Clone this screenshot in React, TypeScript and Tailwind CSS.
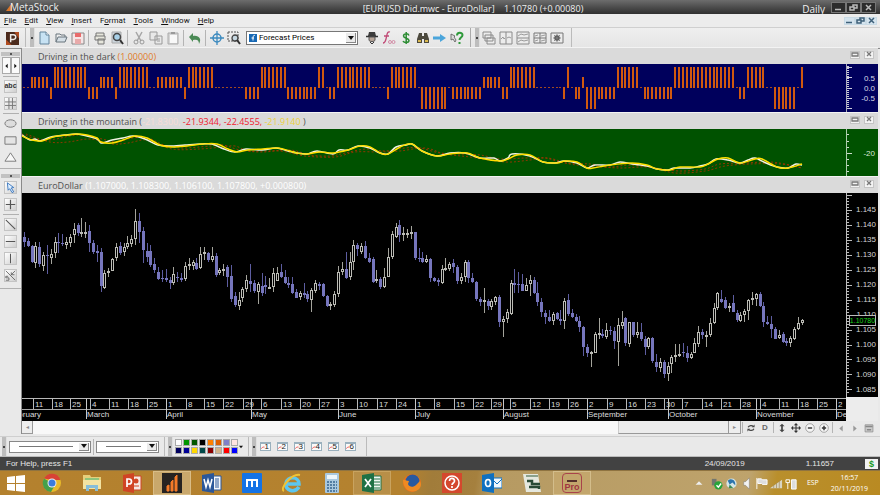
import type { ReactNode } from "react";

type Candle = [number, number, number, number, number];

/* high, body top, body bottom, low, rising (1) or falling (0); thirds of a pixel */
const firstHalf: Candle[] = [
  [365,380,395,410,0],[385,393,407,412,0],[405,407,455,460,0],[395,408,460,475,1],[395,410,462,470,0],
  [425,435,468,482,1],[405,435,437,492,0],[418,432,445,462,1],[380,397,430,445,1],[370,397,400,430,0],
  [372,398,402,408,0],[382,397,405,417,1],[372,380,400,412,1],[340,357,375,398,1],[340,345,368,378,0],
  [323,366,370,380,1],[336,366,370,385,1],[345,362,400,425,0],[390,400,425,432,0],[405,422,430,455,0],
  [415,427,527,545,0],[480,488,533,537,1],[474,482,487,502,1],[443,446,482,484,1],[398,410,445,452,1],
  [395,408,428,435,0],[398,412,425,437,1],[378,400,410,416,1],[375,388,402,412,1],[297,333,388,405,1],
  [310,333,367,400,0],[350,362,420,460,0],[400,422,440,455,0],[405,422,465,470,0],[445,462,480,490,0],
  [470,485,507,510,0],[480,503,507,515,0],[478,505,510,517,0],[502,510,520,537,0],[472,492,520,525,1],
  [485,500,505,515,0],[490,503,510,515,0],[455,468,508,512,1],[445,463,467,480,1],[450,457,467,480,1],
  [445,460,477,480,0],[412,433,475,478,1],[410,427,433,450,1],[425,428,450,455,0],[410,438,450,455,1],
  [430,437,495,500,0],[473,480,490,495,1],[462,476,482,497,1],[465,470,500,530,0],[465,497,567,575,0],
  [545,557,585,590,0],[545,570,587,600,1],
  [532,537,565,577,1],[496,510,537,545,1],[462,512,522,545,0],[510,520,542,548,0],[515,522,545,582,1],
  [490,527,550,558,0],[498,525,532,552,0],[505,530,533,538,1],[475,490,532,545,1],[472,488,512,512,1],
  [463,487,502,505,0],[480,500,520,522,0],[500,518,525,533,0],[500,521,548,551,0],[537,546,563,565,0],
  [543,548,562,570,1],[518,548,555,565,0],[543,552,568,575,0],[534,541,570,605,1],[510,520,542,550,1],
  [515,522,528,540,0],[520,523,558,560,0],[555,558,587,592,0],[575,583,588,600,1],[542,552,585,592,1],
  [468,485,552,562,1],[455,477,487,495,1],[427,478,503,507,0],[425,455,500,510,1],[390,405,457,480,1],
  [400,405,417,437,0],[400,407,427,432,1],[393,408,445,448,0],[430,443,457,460,0],[440,448,515,520,0],
  [480,507,510,520,1],[502,508,532,538,0],[475,500,532,535,1],[415,440,500,502,1],[363,373,442,448,1],
  [340,350,380,385,1],[330,345,375,395,0],[352,370,374,392,1],[357,370,372,385,1],[348,367,371,387,1],
  [365,367,445,450,0],[415,443,447,455,0],[425,445,457,460,0],[435,447,457,458,1],[445,447,505,515,0],
  [500,505,513,515,0],[505,510,517,527,0],[465,478,518,522,1],[445,473,477,483,1],[455,462,477,483,1],
  [448,460,472,488,0],[465,472,513,522,0],
];
const secondHalf: Candle[] = [
  [430,442,453,463,1],[390,397,442,455,1],[390,395,443,460,0],[430,445,455,458,0],[453,455,508,513,0],
  [500,508,517,527,0],[475,510,515,550,1],[507,512,527,540,0],[508,513,530,540,1],[498,502,515,525,1],
  [495,502,575,590,0],[557,568,577,620,1],[537,547,567,580,1],[450,460,553,555,1],[418,460,464,490,0],
  [427,461,465,490,0],[433,463,482,484,0],[443,465,482,483,1],[435,451,463,497,1],[440,450,490,492,0],
  [455,488,515,527,0],[503,517,545,560,0],[540,548,562,583,0],[540,562,572,575,0],[545,552,573,585,1],
  [545,550,567,570,0],[540,567,572,585,0],[505,513,572,597,1],[493,510,553,558,0],[538,550,562,565,0],
  [553,560,573,577,0],[558,573,592,607,0],[588,590,652,677,0],[643,652,670,680,0],[662,667,672,710,1],
  [605,612,668,670,1],[565,608,612,627,1],[597,612,617,623,0],[580,600,622,628,1],[588,600,604,615,0],
  [590,604,633,657,0],[565,585,635,708,1],[543,577,588,597,1],[560,565,640,647,0],[575,577,643,652,1],
  [575,577,615,622,0],[577,607,615,625,1],[580,605,627,632,0],[618,628,650,675,0],[620,625,650,657,1],
  [620,625,693,698,0],[673,695,712,725,0],[683,697,715,725,1],[690,697,733,745,0],[695,707,733,752,1],
  [675,680,703,728,1],[643,675,682,697,1],[643,672,678,682,1],[640,666,670,680,0],[647,670,683,695,0],
  [665,672,683,688,1],[625,640,668,670,1],[587,605,642,650,1],[597,605,615,627,0],[603,615,620,652,1],
  [565,580,615,622,1],[518,533,578,583,1],[487,490,533,540,1],[480,508,515,520,0],[500,510,533,537,0],
  [520,527,533,545,1],[495,520,545,547,0],[540,548,570,575,0],[545,555,573,575,1],[537,543,555,575,1],
  [507,510,542,570,1],[485,505,508,525,1],[488,493,508,527,1],[485,492,527,530,0],[515,527,575,590,0],
  [558,576,582,585,0],[558,583,597,625,0],[590,597,627,628,0],[600,615,625,627,1],[605,612,635,640,0],
  [623,633,640,647,0],[618,625,640,652,1],[592,597,627,630,1],[560,580,598,600,1],[568,571,580,585,1],
];
const candles = [
  ...firstHalf.map((c) => ({ base: 110, c })),
  ...secondHalf.map((c) => ({ base: 130, c })),
];
const barX = (i: number) => Math.round(24 + i * 3.831);

/* signal level, number of bars */
const signal: [number, number][] = [
  [0,2],[0.5,5],[-0.5,1],[1,9],[-0.5,3],[0.5,4],[-0.5,1],[1,8],[0,2],[0.5,7],[-0.5,1],[1,7],[0,8],
  [-0.5,4],[1,7],[-0.5,8],[1,2],[0,1],[-0.5,2],[1,9],[0,4],[-0.5,1],[1,7],[0,1],[-1,7],[0,1],[-0.5,8],
  [0.5,5],[-0.5,2],[1,7],[0,7],[-0.5,1],[1,1],[0,1],[-0.5,2],[0.5,1],[-1,3],[-0.5,5],[1,6],[0,1],
  [-0.5,8],[1,16],[0,1],[-0.5,2],[1,5],[0,2],[-1,6],[0,1],[1,1],
];
const signalBars = signal.flatMap(([v, n]) => Array.from({ length: n }, () => v));

const yellowLine =
  "22,136 32,140 42,141 53,137 67,135 77,134 87,135 97,138 101,142 112,143 123,140 135,136 147,138 160,145 172,147 187,146 203,144 217,144 228,149 237,152 248,150 263,149 278,148 290,151 297,153 307,154 320,152 333,153 348,150 360,146 370,147 380,153 388,154 402,146 412,144 422,151 437,156 450,154 467,153 480,158 500,161 508,159 517,155 530,155 543,162 557,163 565,161 577,162 587,168 593,168 610,165 632,163 647,165 657,169 670,170 680,167 700,167 708,164 718,159 728,158 740,163 755,159 762,159 777,167 788,168 802,164";
const whiteLine =
  "22,135 30,140 35,139 40,141 51,137 65,135 77,134 87,136 97,139 101,143 106,142 112,140 123,138 133,136 145,139 158,145 170,146 185,145 201,144 212,144 224,149 235,152 246,149 262,150 276,148 288,151 297,153 307,154 317,151 333,154 339,150 348,150 358,146 370,148 380,153 388,154 396,147 406,145 412,144 422,151 437,156 450,153 465,153 480,158 494,158 500,161 508,158 512,154 530,156 543,162 555,163 564,161 577,163 587,168 595,165 610,165 620,162 632,164 647,166 657,169 668,170 674,168 690,168 700,166 708,164 716,159 728,160 740,163 748,160 755,158 766,163 777,167 788,168 796,164 802,165";
const redFast =
  "22,134 40,140 56,139 70,136 85,135 102,139 117,142 132,138 148,138 164,145 182,148 210,146 223,145 240,150 262,152 290,150 310,155 330,156 345,153 366,149 385,151 405,148 420,148 440,153 460,154 480,155 500,159 525,158 545,158 565,163 590,164 610,167 630,165 655,168 680,171 705,169 720,164 745,163 770,162 790,165 802,168";
const redSlow =
  "26,134 50,142 68,142 90,139 112,144 128,143 148,140 172,149 200,149 222,147 235,146 250,151 280,151 305,156 335,157 355,152 380,152 400,151 425,148 445,154 470,157 505,162 530,160 548,158 570,164 590,166 620,168 650,167 675,173 705,171 725,166 750,164 780,164 802,168";

/* Catmull-Rom curve through the points */
function smooth(points: string) {
  const p = points.split(" ").map((s) => s.split(",").map(Number));
  const at = (i: number) => p[Math.min(Math.max(i, 0), p.length - 1)];
  let d = `M${p[0][0]} ${p[0][1]}`;
  for (let i = 0; i < p.length - 1; i++) {
    const [a, b, c, e] = [at(i - 1), at(i), at(i + 1), at(i + 2)];
    d += `C${b[0] + (c[0] - a[0]) / 6} ${b[1] + (c[1] - a[1]) / 6} ${c[0] - (e[0] - b[0]) / 6} ${c[1] - (e[1] - b[1]) / 6} ${c[0]} ${c[1]}`;
  }
  return d;
}

const weeks: [number, string][] = [
  [33,"11"],[52,"18"],[70,"25"],[90,"4"],[109,"11"],[128,"18"],[147,"25"],[166,"1"],[186,"8"],[204,"15"],[223,"22"],
  [243,"29"],[261,"6"],[281,"13"],[300,"20"],[319,"27"],[338,"3"],[357,"10"],[377,"17"],[396,"24"],[415,"1"],[434,"8"],
  [454,"15"],[473,"22"],[491,"29"],[510,"5"],[530,"12"],[549,"19"],[568,"26"],[587,"2"],[607,"9"],[626,"16"],[645,"23"],
  [664,"30"],[682,"7"],[702,"14"],[721,"21"],[740,"28"],[760,"4"],[779,"11"],[798,"18"],[817,"25"],[836,"2"],
];
const months: [number, string][] = [
  [86,"March"],[166,"April"],[251,"May"],[338,"June"],[415,"July"],[503,"August"],[587,"September"],[668,"October"],[756,"November"],[836,"December"],
];
const prices = ["1.145","1.140","1.135","1.130","1.125","1.120","1.115","1.110","1.105","1.100","1.095","1.090","1.085"];
const palette = [
  "bg-white","bg-[#009600]","bg-[#005500]","bg-black","bg-[#ff8000]","bg-[#e06000]","bg-[#8080c8]","bg-[#ffe4e1]",
  "bg-[#000060]","bg-[#000096]","bg-[#ffd800]","bg-[#004848]","bg-[#8b0000]","bg-[#d2b48c]","bg-[#ff0000]","bg-[#0000ff]",
];

function Pic({ children, size = 14 }: { children: ReactNode; size?: number }) {
  return (
    <svg width={size} height={size} viewBox="0 0 14 14" fill="none" aria-hidden="true">
      {children}
    </svg>
  );
}
function Tool({ label, children }: { label: string; children: ReactNode }) {
  return (
    <button type="button" aria-label={label} className="flex h-5 w-[17px] shrink-0 items-center justify-center">
      <Pic>{children}</Pic>
    </button>
  );
}
function SmallTool({ label, size = 12, children }: { label: string; size?: number; children: ReactNode }) {
  return (
    <button type="button" aria-label={label} className="flex h-3 w-[14px] shrink-0 items-center justify-center">
      <Pic size={size}>{children}</Pic>
    </button>
  );
}
function TrayIcon({ label, children }: { label: string; children: ReactNode }) {
  return (
    <button type="button" aria-label={label} className="flex w-[15px] shrink-0 items-center justify-center">
      <Pic size={13}>{children}</Pic>
    </button>
  );
}
const Sep = () => <span className="mx-[2px] h-4 w-px shrink-0 bg-[#b4b4b4]" />;
const ThinSep = () => <span className="mx-px h-[11px] w-px shrink-0 bg-[#b4b4b4]" />;
const Grip = () => (
  <span className="flex h-full w-[5px] shrink-0 items-center justify-center border-r border-[#e0e0e0] bg-[#bdbdbd]">
    <span className="size-[2px] bg-[#444]" />
  </span>
);

function TitleBar() {
  return (
    <header className="flex h-[14px] shrink-0 items-center justify-between bg-linear-to-b from-[#6d6d6d] to-[#303030] pr-1 pl-[6px] text-[10px] leading-[14px] text-[#efefef]">
      <div className="flex flex-1 items-center">
        <svg width="6" height="10" viewBox="0 0 6 10" aria-hidden="true"><path d="M0 9 6 1v8z" fill="#d9772b" /></svg>
        <span className="-ml-[2px] font-['Open_Sans',sans-serif] text-[10px] font-medium">MetaStock</span>
      </div>
      <h1 className="ml-[64px] pt-[4px] font-['Open_Sans',sans-serif] text-[9px] whitespace-pre">[EURUSD Did.mwc - EuroDollar]{"    "}1.10780 (+0.00080)</h1>
      <div className="flex flex-1 items-center justify-end">
        <span className="mr-[6px] pt-[3px] font-['Open_Sans',sans-serif]">Daily</span>
        <WindowButtons className="h-[11px] w-[15px] border border-[#777] bg-[#2c2c2c] text-[#bbb]" />
      </div>
    </header>
  );
}
function WindowButtons({ className }: { className: string }) {
  return (
    <div className="flex">
      {["Minimize", "Restore", "Close"].map((n) => (
        <button key={n} type="button" aria-label={n} className={`flex items-center justify-center ${className}`}>
          <svg width="9" height="7" viewBox="0 0 9 7" fill="none" stroke="currentColor" strokeWidth="1.5" aria-hidden="true">
            {n === "Minimize" && <path d="M1 5.5h6" />}
            {n === "Restore" && <path d="M1 3h4v3H1zM4 3V1h4v3H5" />}
            {n === "Close" && <path d="m2 1 5 5M7 1 2 6" />}
          </svg>
        </button>
      ))}
    </div>
  );
}
function MenuBar() {
  return (
    <nav className="flex h-[14px] shrink-0 items-center border-b border-[#cfcfcf] bg-[#ececec] pr-[3px] pl-[4px]">
      <ul className="flex flex-1 gap-[8px] font-[Roboto,'Liberation_Sans',sans-serif] text-[8px] leading-[12px] text-[#111]">
        {[["","F","ile"],["","E","dit"],["","V","iew"],["","I","nsert"],["F","o","rmat"],["","T","ools"],["","W","indow"],["","H","elp"]].map(([a, b, c]) => (
          <li key={b}><button type="button">{a}<u>{b}</u>{c}</button></li>
        ))}
      </ul>
      <WindowButtons className="h-[8px] w-[11px] border border-[#c9dbe6] bg-[#d5e4ee] text-[#3e607a]" />
    </nav>
  );
}
function Toolbar() {
  return (
    <div role="toolbar" aria-label="Standard" className="flex h-[21px] shrink-0 items-center border-b border-[#8a8a8a] bg-linear-to-b from-[#efefef] to-[#e5e5e5]">
      <button type="button" aria-label="Power Console" className="flex w-[25px] shrink-0 justify-center">
        <svg width="13" height="13" viewBox="0 0 14 14" aria-hidden="true">
          <path d="M0 0h14v14H0z" fill="#4b2a1c" /><path d="M0 8 6 14H0zM9 0h5v7z" fill="#b04c20" />
          <path d="M5 11V3h3a2 2 0 0 1 0 5H5" fill="none" stroke="#f0ece8" strokeWidth="1.6" />
        </svg>
      </button>
      <span className="h-full w-px bg-[#bbb]" />
      <span className="w-[4px]" />
      <Grip />
      <Tool label="New"><path d="M3 1h6l3 3v9H3z" fill="#c7e2f3" stroke="#62839a" /><path d="M9 1v3h3" stroke="#62839a" fill="#fff" /></Tool>
      <Tool label="Open"><path d="M2 11V3h4l1 1h4v2" stroke="#69757d" fill="#eee" /><path d="M2 11 4 6h9l-2 5z" stroke="#69757d" fill="#d5dfe6" /></Tool>
      <Tool label="Save"><path d="M1 2h12v11H1z" fill="#f5e5e5" stroke="#888" /><path d="M4 2h6v4H4z" fill="#e86b6b" /><path d="M4 8h6v5H4z" fill="#e8a9a9" /></Tool>
      <Sep />
      <Tool label="Print"><path d="M3 5V2h8v3M2 5h10v4H2zM5 8h6v5H5z" fill="#e6e6dc" stroke="#777" /></Tool>
      <Tool label="Print preview"><path d="M2 1h9v11H2z" fill="#ccd5dc" stroke="#a8a8a8" /><circle cx="7" cy="6" r="3.5" fill="#a8d0e8" stroke="#444" strokeWidth="1.5" /><path d="m10 9 3 4" stroke="#333" strokeWidth="2" /></Tool>
      <Sep />
      <Tool label="Cut"><path d="m4 1 5 9M10 1 5 10" stroke="#a5a5a5" strokeWidth="1.5" /><circle cx="4" cy="11" r="2" stroke="#999" /><circle cx="10" cy="11" r="2" stroke="#999" /></Tool>
      <Tool label="Copy"><path d="M1 1h7v8H1zM6 5h7v8H6z" fill="#e8e8e8" stroke="#999" /><path d="M8 8h3M8 10h3" stroke="#999" /></Tool>
      <Tool label="Paste"><path d="M2 2h10v11H2z" fill="#d4d4d4" stroke="#aaa" /><path d="M5 1h4v2H5z" fill="#999" /><path d="M4 4h7v8H4z" fill="#f8f8f8" /></Tool>
      <Sep />
      <Tool label="Undo"><path d="m1 6 4-4v3c6-1 9 3 6 8 0-4-2-5-6-4v2z" fill="#4b8a55" /></Tool>
      <Sep />
      <Tool label="Crosshair"><circle cx="7" cy="7" r="4" stroke="#3c8abf" strokeWidth="1.5" /><path d="M7 0v14M0 7h14" stroke="#3c8abf" strokeWidth="1.3" /></Tool>
      <Tool label="Zoom in area"><path d="M1 1h10v9H1z" stroke="#555" strokeDasharray="2 1" /><circle cx="8" cy="7" r="3" fill="#c7d8e2" stroke="#444" strokeWidth="1.3" /><path d="m10 9 3 4" stroke="#333" strokeWidth="2" /></Tool>
      <div className="relative mr-[5px] ml-[4px] h-[14px] w-[112px] shrink-0">
        <select aria-label="Template" className="block h-[14px] w-full appearance-none border border-[#777] bg-white py-0 pl-[12px] font-[Roboto,'Liberation_Sans',sans-serif] text-[8px] leading-[12px] text-black">
          <option>Forecast Prices</option>
        </select>
        <svg className="pointer-events-none absolute top-[3px] left-[3px]" width="8" height="8" viewBox="0 0 8 8" aria-hidden="true"><path d="M0 0h8v8H0z" fill="#1768b4" /><path d="M6 1.5c-2-.5-2 1-2 5M2.500 4H5" stroke="#fff" fill="none" /></svg>
        <ComboArrow />
      </div>
      <Tool label="Expert advisor"><path d="M4 1h6l1 4H3z" fill="#3c3c3c" /><path d="M1 5.500h12" stroke="#333" strokeWidth="1.500" /><path d="M4 6h6v3c0 2-6 2-6 0z" fill="#b7a598" stroke="#555" /><path d="m5 11 2 2 2-2" stroke="#333" /></Tool>
      <Tool label="Indicator builder"><path d="M8 1C5 0 5 4 4 8s-2 4-3 4M2 5h5" stroke="#c14a76" strokeWidth="1.300" /><circle cx="8" cy="11" r="1.500" stroke="#d28ba5" /><circle cx="11.500" cy="11" r="1.500" stroke="#d28ba5" /></Tool>
      <Tool label="System tester"><path d="M10 4.500C9 2 4.500 2.500 4.500 5S10 7 10 9.500 5 12 4 10M7.200 1v12" stroke="#2c8c33" strokeWidth="1.500" /></Tool>
      <Tool label="Explorer"><path d="m3 2-2 6v4h5V8h2v4h5V8l-2-6H8v3H6V2z" fill="#4d4a3e" /><path d="M2 9h3v2H2zM9 9h3v2H9z" fill="#d9b84e" /></Tool>
      <Tool label="Forward"><path d="M0 5.500h7V3l6 4-6 4V8.500H0z" fill="#4ba5db" /></Tool>
      <Tool label="Help"><path d="m1 3 4 2-1 1 2 3-1 2-2-3-2 1z" stroke="#555" fill="#ddd" strokeWidth=".8" /><path d="M7 4.500C7 1 12.500 1 12.500 4c0 2.500-3 2.500-3 5" stroke="#2f9a3b" strokeWidth="2" /><path d="M8.500 11h2v2h-2z" fill="#2f9a3b" /></Tool>
      <span className="ml-[5px] h-full w-px bg-[#aaa]" />
      <span className="w-1" />
      <Grip />
      <Tool label="Cascade"><path d="M1 1h8v6H1zM3 4h8v6H3zM5 7h8v6H5z" fill="#ececec" stroke="#8a8a8a" /></Tool>
      <Tool label="Tile columns"><path d="M1 1h12v12H1zM7 1v12" fill="#ececec" stroke="#8a8a8a" /><path d="m2 8 2-2 1 2 1-1M8 7l2-1 2 1" stroke="#999" /></Tool>
      <Tool label="Tile rows"><path d="M1 1h12v12H1zM1 7h12" fill="#ececec" stroke="#8a8a8a" /><path d="m2 5 3-2 3 1 4-1M2 11l3-2 3 1 4-1" stroke="#999" /></Tool>
      <Tool label="Tile grid"><path d="M1 2h12v10H1zM7 2v10M1 7h12" fill="#ececec" stroke="#777" /><path d="m2 5 3-1M8 5l4-1M2 10l3-1M8 10l4-1" stroke="#999" /></Tool>
      <Tool label="Layout settings"><path d="M1 2h12v10H1z" fill="#ececec" stroke="#777" /><circle cx="7" cy="7" r="2" stroke="#555" strokeWidth="1.500" /><path d="M7 3v8M3 7h8M4 4l6 6M10 4l-6 6" stroke="#666" strokeWidth=".7" /></Tool>
      <span className="ml-[6px] h-full w-px bg-[#bbb]" />
    </div>
  );
}
function ComboArrow() {
  return (
    <span className="pointer-events-none absolute top-[2px] right-[2px] bottom-[2px] flex w-[10px] items-center justify-center border-r border-b border-[#888] bg-[#ebebeb]">
      <svg width="6" height="4" viewBox="0 0 6 4" aria-hidden="true"><path d="M0 0h6L3 4z" fill="#111" /></svg>
    </span>
  );
}

function SideTool({ label, children, plain }: { label: string; children: ReactNode; plain?: boolean }) {
  return (
    <button type="button" aria-label={label} className={`my-[2px] flex size-[13px] items-center justify-center ${plain ? "" : "border border-[#c4c4c4] bg-linear-to-br from-white to-[#cfcfcf]"}`}>
      <Pic size={13}>{children}</Pic>
    </button>
  );
}
const SideSep = () => <span className="my-px h-px w-4 bg-[#b0b0b0]" />;
const SideGrip = () => <span className="flex h-[4px] w-[19px] justify-center bg-[#c2c2c2]"><span className="mt-px size-[2px] bg-[#555]" /></span>;

function Sidebar() {
  return (
    <aside aria-label="Drawing tools" className="flex w-[22px] shrink-0 flex-col items-center border-r border-[#8a8a8a] bg-[#e9e9e9] pt-[3px]">
      <SideGrip />
      <div className="my-px flex">
        {["M6 0v6L3 3z", "M3 0v6l3-3z"].map((d, i) => (
          <button key={d} type="button" aria-label={i ? "Next" : "Previous"} className="flex h-[17px] w-[9px] items-center justify-center border border-[#aaa] bg-[#fafafa]">
            <svg width="7" height="6" viewBox="0 0 9 6" aria-hidden="true"><path d={d} fill="#111" /></svg>
          </button>
        ))}
      </div>
      <SideSep />
      <button type="button" className="my-[2px] flex size-[13px] justify-center border border-[#c4c4c4] bg-linear-to-br from-white to-[#cfcfcf] text-[7px] leading-[10px] font-bold text-[#333]">abc</button>
      <SideTool label="Grid"><path d="M5 0v14M9.500 0v14M0 5h14M0 9.500h14" stroke="#777" strokeWidth="1.200" /></SideTool>
      <SideSep />
      <SideTool label="Ellipse" plain><ellipse cx="7" cy="7" rx="6" ry="4" fill="#ddd" stroke="#777" /></SideTool>
      <SideTool label="Rectangle" plain><path d="M1 3h12v8H1z" fill="#e4e4e4" stroke="#777" /></SideTool>
      <SideTool label="Triangle" plain><path d="m7 2 6 9H1z" fill="#f8f8f8" stroke="#777" /></SideTool>
      <span className="h-[2px]" />
      <span className="mb-[5px] h-px w-full bg-[#b0b0b0]" />
      <SideGrip />
      <span className="h-px" />
      <SideTool label="Select"><path d="m3 1 8 6-3 .5 3 5-2 1-3-5-2 2z" fill="#dfefff" stroke="#1c62b5" /></SideTool>
      <SideTool label="Crosshair"><path d="M7 1v12M1 7h12" stroke="#555" strokeWidth="1.500" /></SideTool>
      <SideSep />
      <SideTool label="Trendline"><path d="m1 1 12 12" stroke="#555" strokeWidth="1.300" /></SideTool>
      <SideTool label="Horizontal line"><path d="M1 7h12" stroke="#555" strokeWidth="1.300" /></SideTool>
      <SideTool label="Vertical line"><path d="M7 1v12" stroke="#555" strokeWidth="1.300" /></SideTool>
      <SideTool label="Fibonacci"><path d="m1 1 12 12M13 1 8 6M8 3v3h4M4 8H1v2h4v3H1" stroke="#555" /></SideTool>
      <span className="mt-[4px] h-px w-full bg-[#b0b0b0]" />
    </aside>
  );
}

function PanelHeader({ children }: { children: ReactNode }) {
  return (
    <div className="flex h-[17px] shrink-0 items-center border-t border-[#f3f3f3] bg-[#dadada] pr-[4px] pl-4 font-['Open_Sans',sans-serif] text-[9px] leading-[14px] text-[#505050]">
      <h2 className="flex-1 pt-px whitespace-pre">{children}</h2>
      <div className="mb-[3px] flex gap-[4px]">
        {["M2 2h6v3H2z", "m3 1 4 4M7 1 3 5"].map((d, i) => (
          <button key={d} type="button" aria-label={i ? "Close panel" : "Maximize panel"} className="flex h-[8px] w-[10px] items-center justify-center border border-[#c4c4c4] bg-[#f3f3f3]">
            <svg className="shrink-0" width="10" height="7" viewBox="0 0 10 7" aria-hidden="true"><path d={d} fill="none" stroke="#777" strokeWidth="1.300" /></svg>
          </button>
        ))}
      </div>
    </div>
  );
}

function DarkPanel() {
  return (
    <div className="flex h-[48px] shrink-0 bg-[#00005c]">
      <svg className="h-full min-w-0 flex-1" viewBox="22 64 824 48" preserveAspectRatio="none" role="img" aria-label="Driving in the dark">
        {signalBars.map((v, i) => (
          <rect key={i} x={barX(i) - 1} width="2" y={v > 0 ? (v === 1 ? 67 : 77) : 87} height={v === 0 ? 1 : v > 0 ? (v === 1 ? 21 : 11) : v === -1 ? 22 : 12} fill={v === 0 ? "#a04a20" : "#d0590f"} />
        ))}
      </svg>
      <div className="relative w-8 border-l border-[#aab]">
        <svg className="absolute top-0 left-0" width="8" height="48" aria-hidden="true">
          <path d="M0 3.500h5M0 13.500h5M0 24.500h5M0 34.500h5M0 44.500h5" stroke="#ccd" />
          <path d="M1 2v44" stroke="#ccd" strokeWidth="2" strokeDasharray="1 1" />
        </svg>
        <div className="flex flex-col pt-[10px] pr-[3px] text-right text-[8px] leading-[10px] text-[#d8d8e8]">
          <span>0.5</span><span>0.0</span><span>-0.5</span>
        </div>
      </div>
    </div>
  );
}
function MountainPanel() {
  return (
    <div className="flex h-[47px] shrink-0 bg-[#005200]">
      <svg className="h-full min-w-0 flex-1" viewBox="22 129 824 47" preserveAspectRatio="none" fill="none" role="img" aria-label="Driving in the mountain">
        <path d={smooth(redFast)} stroke="#b83000" strokeWidth=".8" strokeDasharray="2 2" />
        <path d={smooth(redSlow)} stroke="#b03000" strokeWidth=".8" strokeDasharray="2 2" />
        <path d={smooth(whiteLine)} stroke="#f2f2e0" strokeWidth="1.500" />
        <path d={smooth(yellowLine)} stroke="#ffdf00" strokeWidth="1.500" />
      </svg>
      <div className="flex w-8 items-center justify-between border-l border-[#aca] pr-[3px]">
        <svg width="6" height="47" aria-hidden="true"><path d="M0 5.500h2M0 12.500h2M0 18.500h2M0 24.500h5M0 30.500h2M0 36.500h2M0 42.500h2" stroke="#cdc" /></svg>
        <span className="pt-[2px] text-[8px] leading-[10px] text-[#d8e6d8]">-20</span>
      </div>
    </div>
  );
}
function PricePanel() {
  const y = (base: number, v: number) => Math.round(base + v / 3);
  return (
    <div className="flex min-h-[204px] flex-1 bg-black">
      <div className="relative min-w-0 flex-1">
        <svg className="absolute size-full" viewBox="22 193 824 204" preserveAspectRatio="none" role="img" aria-label="EuroDollar daily candles">
          {candles.map(({ base, c: [h, t, b, l, up] }, i) => {
            const x = barX(i);
            const top = y(base, t);
            const bottom = Math.max(y(base, b), top + 1);
            const hi = y(base, h);
            const lo = y(base, l);
            const tone = up ? "#a4a49c" : "#5d5da0";
            return (
              <g key={i}>
                <rect x={x} y={hi} width="1" height={Math.max(lo - hi, 1)} fill={tone} />
                {up ? (
                  <rect x={x - 0.5} y={top + 0.5} width="2" height={Math.max(bottom - top - 1, 1)} fill="#000" stroke="#bcbcb6" />
                ) : (
                  <rect x={x - 1} y={top} width="3" height={bottom - top} fill="#7676bd" />
                )}
              </g>
            );
          })}
        </svg>
      </div>
      <div className="relative w-8 border-l border-[#bbb]">
        <svg className="absolute top-0 left-0 h-full w-2" viewBox="0 193 8 204" preserveAspectRatio="none" aria-hidden="true">
          {Array.from({ length: 67 }, (_, i) => {
            const major = i % 5 === 0;
            return <rect key={i} x="0" y={Math.round(195 + i * 2.99)} width={major ? 5 : 2} height="1" fill="#bcbcbc" />;
          })}
        </svg>
        <div className="flex h-full flex-col justify-between pt-[12px] pr-[2px] pb-[2px] text-right text-[8px] leading-[10px] text-[#d4d4d4]">
          {prices.map((p) => <span key={p}>{p}</span>)}
        </div>
        <span className="absolute top-[60%] right-[2px] left-[2px] flex h-[11px] items-center justify-center border border-[#bbb] bg-black text-[7px] text-[#18d818]">1.10780</span>
      </div>
    </div>
  );
}
function DateAxis() {
  const pct = (x: number) => `${((x - 22) / 824) * 100}%`;
  return (
    <div className="flex h-[24px] shrink-0 bg-[#ececec]">
      <svg className="min-w-0 flex-1 bg-black" height="24" role="img" aria-label="Dates" fontSize="8" fill="#dcdcdc">
        <rect y="1" width="100%" height="1" fill="#b8b8b8" />
        <rect y="12" width="100%" height="1" fill="#a8a8a8" />
        {weeks.map(([x, d]) => (
          <g key={x}>
            <rect x={pct(x)} y="2" width="1" height="10" fill="#b8b8b8" />
            <text x={pct(x + 2)} y="10">{d}</text>
          </g>
        ))}
        <text x={pct(41)} y="20" textAnchor="end">February</text>
        {months.map(([x, m]) => (
          <g key={m}>
            <rect x={pct(x)} y="2" width="1" height="20" fill="#c8c8c8" />
            <text x={pct(x + 1)} y="20">{m}</text>
          </g>
        ))}
      </svg>
      <span className="w-8" />
    </div>
  );
}
function ScrollRow() {
  return (
    <div className="flex h-[13px] shrink-0 items-stretch">
      <button type="button" aria-label="Scroll left" className="flex w-[11px] items-center justify-center border-r border-b border-[#999] bg-[#ededed] text-[6px] text-[#888]">◂</button>
      <div className="flex flex-1 justify-end bg-[#f8f8f8]"><span className="w-[111px] border-r border-b border-l border-[#999] border-l-[#ccc] bg-[#ececec]" /></div>
      <button type="button" aria-label="Scroll right" className="flex w-[12px] items-center justify-center border-r border-b border-[#999] bg-[#ededed] text-[6px] text-[#888]">▸</button>
      <div className="flex w-[137px] items-center">
        <ThinSep />
        <SmallTool label="Refresh" size={10}><path d="M3 6c1-3 6-3 7-1M11 8c-1 3-6 3-7 1" stroke="#444" strokeWidth="1.700" /><path d="M12 2v4H8zM2 12V8h4z" fill="#444" /></SmallTool>
        <button type="button" className="w-[14px] text-[8px] leading-[10px] font-bold text-[#666]">D</button>
        <ThinSep />
        <SmallTool label="Fit height"><path d="M7 4v6" stroke="#444" strokeWidth="2" /><path d="m4 5 3-3 3 3zM4 9l3 3 3-3z" fill="#444" /></SmallTool>
        <SmallTool label="Pan" size={10}><path d="M7 2v10M2 7h10" stroke="#333" strokeWidth="1.500" /><path d="m4 3 3-3 3 3zM4 11l3 3 3-3zM3 4 0 7l3 3zM11 4l3 3-3 3z" fill="#333" /></SmallTool>
        <SmallTool label="Zoom out" size={10}><circle cx="7" cy="7" r="6" fill="#f6f6f6" stroke="#888" /><path d="M4 7h6" stroke="#333" strokeWidth="2" /></SmallTool>
        <SmallTool label="Zoom in" size={10}><circle cx="7" cy="7" r="6" fill="#f6f6f6" stroke="#888" /><path d="M4 7h6M7 4v6" stroke="#333" strokeWidth="2" /></SmallTool>
        <ThinSep />
        <SmallTool label="Back"><path d="M9 4v7L5 7.500z" fill="#999" /></SmallTool>
        <SmallTool label="Forward"><path d="M5 4v7l4-3.500z" fill="#999" /></SmallTool>
        <SmallTool label="Calendar" size={10}><path d="M1.500 2.500h11v10h-11z" fill="#ccc" stroke="#888" /><path d="M2 5h10M4 9.500h6" stroke="#888" strokeWidth="2" /></SmallTool>
      </div>
    </div>
  );
}

function LineSelect({ label, width }: { label: string; width: string }) {
  return (
    <div className={`relative h-[12px] shrink-0 ${width}`}>
      <select aria-label={label} className="block size-full appearance-none border border-[#888] bg-white" />
      <span className="pointer-events-none absolute top-[5px] right-[18px] left-[10px] h-px bg-[#777]" />
      <ComboArrow />
    </div>
  );
}
function BottomBar() {
  return (
    <div role="toolbar" aria-label="Line style" className="flex h-[21px] shrink-0 items-center border-t border-b border-t-[#cfcfcf] border-b-[#bbb] bg-[#e9e9e9] pl-[2px]">
      <Grip />
      <span className="w-[2px]" />
      <LineSelect label="Line style" width="w-[82px]" />
      <Sep />
      <LineSelect label="Line weight" width="w-[63px]" />
      <span className="ml-[5px] h-full w-px bg-[#bbb]" />
      <span className="w-[3px]" />
      <Grip />
      <div className="ml-[2px] grid grid-cols-8 gap-px">
        {palette.map((c) => <button key={c} type="button" aria-label="Colour" className={`size-[7px] border border-[#aaa] ${c}`} />)}
      </div>
      <svg className="mx-px" width="4" height="4" viewBox="0 0 6 4" aria-hidden="true"><path d="M0 0h6L3 4z" fill="#111" /></svg>
      <span className="ml-[4px] h-full w-px bg-[#bbb]" />
      <span className="w-[3px]" />
      <Grip />
      {[1, 2, 3, 4, 5, 6].map((n) => (
        <button key={n} type="button" className="ml-[3px] flex h-[9px] w-[11px] shrink-0 items-center justify-end border border-t-2 border-[#9ab0bd] bg-[#fafafa] pr-px text-[8px] leading-[8px] text-[#222] [&+button]:ml-[6px]">
          <svg width="4" height="5" viewBox="0 0 4 5" aria-hidden="true"><path d="m0 4 2-2 2 0" stroke="#e55" fill="none" /></svg>{n}
        </button>
      ))}
      <span className="ml-[10px] h-full w-px bg-[#bbb]" />
    </div>
  );
}

const apps: { name: string; art: ReactNode; tone?: string }[] = [
  { name: "Chrome", art: <><circle cx="10" cy="10" r="9" fill="#e8ba2a" /><path d="M2 5.500A9 9 0 0 1 18.500 7H10z" fill="#d84235" /><path d="M2 5.500A9 9 0 0 0 9 19l4-7z" fill="#45a04b" /><circle cx="10" cy="10" r="4.500" fill="#eee" /><circle cx="10" cy="10" r="3.500" fill="#3b7cdc" /></> },
  { name: "File Explorer", art: <><path d="M1 2h7l1 2h10v12H1z" fill="#e6cf7c" /><path d="M3 5h14v3H3z" fill="#8fc47b" /><path d="M1 7h18v9H1z" fill="#f3e3a2" /><path d="M4 18v-6h12v6h-3v-3H7v3z" fill="#86bdd8" /></> },
  { name: "PowerPoint", art: <><path d="M10 3h9v14h-9z" fill="#f6e9e4" stroke="#cf4526" /><circle cx="14" cy="8" r="2.500" fill="#d24625" /><path d="M12 13h5" stroke="#d24625" /><path d="m1 2 11-2v20L1 18z" fill="#d04424" /><path d="M5 14V6h2a2 2 0 0 1 0 5H5" stroke="#fff" strokeWidth="1.700" fill="none" /></> },
  { name: "MetaStock", tone: "border border-[#d9bd87] bg-[#c9a86c]", art: <><path d="M0 0h20v20H0z" fill="#262321" /><path d="M5 18v-5l2-1v6zM9 18V9l2-2v11zM13 18V4l2-2v16z" fill="#f47a28" stroke="#f47a28" /></> },
  { name: "Word", art: <><path d="M10 3h9v14h-9z" fill="#f5f7fa" stroke="#2b579a" /><path d="M13 6h4M13 8h4M13 10h4M13 12h4M13 14h4" stroke="#2b579a" /><path d="m0 2 12-2v20L0 18z" fill="#2b579a" /><path d="m2 6 2 8 2-7 2 7 2-8" stroke="#fff" strokeWidth="1.500" fill="none" /></> },
  { name: "Maxthon", art: <><rect width="20" height="20" rx="1" fill="#1473e6" /><path d="M5 14V7h10v7M10 7v7" stroke="#fff" strokeWidth="2" fill="none" /></> },
  { name: "Internet Explorer", art: <><path d="M17 14c-5 7-14 3-13-4s13-7 13 1H5" stroke="#5cc7f0" strokeWidth="3.500" fill="none" /><path d="M2 18C-3 16 10 0 18 2" stroke="#f1c232" strokeWidth="2" fill="none" /></> },
  { name: "Calculator", art: <><rect x="3" y="0" width="14" height="20" rx="1" fill="#a9c8df" /><path d="M5 2h10v4H5z" fill="#edf5fa" /><path d="M5 9h10M5 12h10M5 15h10M5 18h10" stroke="#527da3" strokeWidth="2" strokeDasharray="2 1" /></> },
  { name: "Excel", tone: "border border-[#c9a35f] bg-[#b88f48]", art: <><path d="M10 3h9v14h-9z" fill="#eef6f0" stroke="#217346" /><path d="M12 6h6M12 9h6M12 12h6M12 15h6" stroke="#217346" /><path d="m0 2 12-2v20L0 18z" fill="#1e7145" /><path d="m3 6 6 8M9 6l-6 8" stroke="#fff" strokeWidth="1.700" /></> },
  { name: "Firefox", art: <><circle cx="10" cy="10" r="9" fill="#e8701b" /><circle cx="10.500" cy="8.500" r="7" fill="#29599f" /><path d="M1 7c2-1 3 1 6 1l-1 3c1 3 5 4 8 1l4-4 1 3c0 10-18 11-18-4z" fill="#ee8a22" /></> },
  { name: "Help", art: <><path d="M0 0h20v20H0z" fill="#d4482d" /><circle cx="10" cy="10" r="7" stroke="#fff" strokeWidth="1.500" fill="none" /><path d="M7.500 8c0-4 5-3 5 0 0 2-2.500 2-2.500 4M10 13v2" stroke="#fff" strokeWidth="1.700" fill="none" /></> },
  { name: "Outlook", art: <><path d="M10 5h10v10H10z" fill="#f2f8fd" stroke="#1070c0" /><path d="m10 6 5 5 5-5" stroke="#1070c0" fill="none" /><path d="m0 2 12-2v20L0 18z" fill="#1070c0" /><ellipse cx="6" cy="10" rx="2.500" ry="3.500" stroke="#fff" strokeWidth="1.700" fill="none" /></> },
  { name: "Notes", art: <><path d="M1 1h15l3 18H4z" fill="#e5e8df" /><path d="M4 3h12" stroke="#8ba08c" strokeWidth="2" /><path d="M5 8h5v3h8M7 14h10v2" stroke="#294b35" strokeWidth="2.500" fill="none" /></> },
];
function Taskbar() {
  return (
    <footer className="flex h-[25px] shrink-0 items-stretch border-t border-[#8f7340] bg-[linear-gradient(100deg,#b4812e_0%,#b4822f_46%,#a17c3a_49%,#a5803e_54%,#b69a62_56%,#bea36c_85%,#b98f2c_88%,#b98a22_100%)]">
      <button type="button" aria-label="Start" className="flex w-8 items-center justify-center">
        <svg width="18" height="17" viewBox="0 0 18 17" fill="#fff" aria-hidden="true"><path d="m0 2 8-1v7H0zM9 1l9-1v8H9zM0 9h8v7l-8-1zM9 9h9v8l-9-1z" /></svg>
      </button>
      {apps.map((a) => (
        <button key={a.name} type="button" aria-label={a.name} className={`mx-px flex w-[38px] items-center justify-center ${a.tone ?? ""}`}>
          <svg width="20" height="20" viewBox="0 0 20 20" aria-hidden="true">{a.art}</svg>
        </button>
      ))}
      <button type="button" className="mx-px flex w-[38px] items-center justify-center border border-[#d3bd8b] bg-[#c3a66c]">
        <span className="flex size-5 flex-col items-center justify-end rounded-[4px] border border-[#a8434b] text-[9px] leading-[10px] font-bold text-[#a03540]">
          <span className="h-[2px] w-[10px] bg-[#54302a]" />Pro
        </span>
      </button>
      <div className="flex flex-1 items-center justify-end pr-3 text-white">
        <button type="button" aria-label="Show hidden icons" className="mr-[6px]"><Pic size={8}><path d="m1 10 6-6 6 6z" fill="#eee" /></Pic></button>
        <TrayIcon label="Safely remove"><path d="M2 2h5v7H2z" fill="#72766f" /><circle cx="9" cy="9" r="4.500" fill="#29a43a" /><path d="m7 9 2 2 3-4" stroke="#fff" strokeWidth="1.500" /></TrayIcon>
        <TrayIcon label="Sync"><circle cx="7" cy="7" r="5.500" fill="#d5e5e5" /><path d="M3 4c4-4 9 0 8 5L8 6 5 8z" fill="#2d74ad" /><path d="m4 12 1-4 4 4z" fill="#3d8b56" /></TrayIcon>
        <TrayIcon label="Volume"><path d="M4 5h2l4-4v12L6 9H4z" fill="#f2f2f2" stroke="#777" strokeWidth=".5" /></TrayIcon>
        <TrayIcon label="Action center"><path d="M2 1v12M3 2h4l1 1h5v5H8L7 7H3z" stroke="#fff" fill="#ddd" /></TrayIcon>
        <TrayIcon label="Network"><path d="M0 12 13 3v9z" fill="#d8d4c4" /><path d="M4 8v4M7 6v6M10 4v8" stroke="#a38d5c" strokeWidth=".8" /></TrayIcon>
        <TrayIcon label="Battery"><path d="M7 3h5v10H7z" stroke="#fff" fill="#ddd" /><path d="M1 3h4v3H1zM3 6v7" stroke="#fff" /></TrayIcon>
        <span className="ml-[8px] font-['Open_Sans',sans-serif] text-[7px]">ESP</span>
        <div className="ml-[12px] text-center font-['Open_Sans',sans-serif] text-[7px] leading-[11px]"><div>16:57</div><div>20/11/2019</div></div>
      </div>
    </footer>
  );
}

export default function App() {
  return (
    <div className="flex min-h-screen flex-col bg-[#e9e9e9] font-['Liberation_Sans',Arial,sans-serif]">
      <TitleBar />
      <MenuBar />
      <Toolbar />
      <div className="flex flex-1">
        <Sidebar />
        <main className="mr-[2px] flex min-w-0 flex-1 flex-col">
          <div className="-mt-[2px] flex flex-col">
            <PanelHeader>Driving in the dark <span className="text-[#e07a28]">(1.00000)</span></PanelHeader>
            <DarkPanel />
          </div>
          <PanelHeader>Driving in the mountain (<span className="text-[#f8dcd8]">-21.8300, </span><span className="text-[#f02030]">-21.9344, -22.4555, </span><span className="text-[#ecd040]">-21.9140</span> )</PanelHeader>
          <MountainPanel />
          <PanelHeader>EuroDollar <span className="text-white">(1.107000, 1.108300, 1.106100, 1.107800, +0.000800)</span></PanelHeader>
          <PricePanel />
          <DateAxis />
          <ScrollRow />
        </main>
      </div>
      <span className="h-[2px] shrink-0" />
      <BottomBar />
      <div role="status" className="flex h-[13px] shrink-0 items-center bg-[#424242] pr-[2px] pl-[6px] text-[8px] leading-[12px] text-[#e6e6e6]">
        <span className="flex-1">For Help, press F1</span>
        <span className="mr-[61px]">24/09/2019</span>
        <span className="mr-[31px]">1.11657</span>
        <span className="flex h-[10px] w-[13px] items-center justify-center bg-[#f2f2f2] text-[9px] font-bold text-[#159a22]">$</span>
      </div>
      <Taskbar />
    </div>
  );
}
